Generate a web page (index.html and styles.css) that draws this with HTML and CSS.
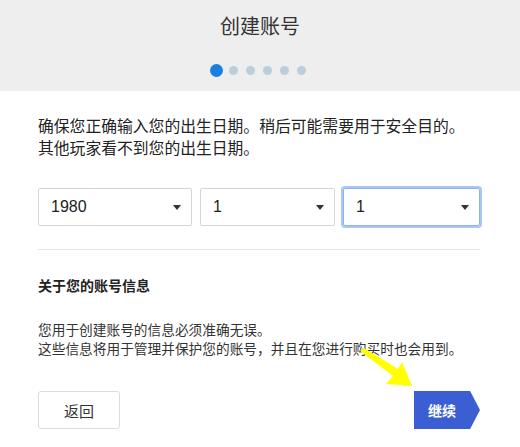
FILE: index.html
```html
<!DOCTYPE html>
<html lang="zh-CN">
<head>
    <meta charset="UTF-8">
    <title>创建账号</title>
    <link rel="stylesheet" href="styles.css">
</head>
<body>
    <div class="header">
        <h1>创建账号</h1>
        <div class="steps">
            <span class="dot active"></span>
            <span class="dot"></span>
            <span class="dot"></span>
            <span class="dot"></span>
            <span class="dot"></span>
            <span class="dot"></span>
        </div>
    </div>

    <div class="content">
        <div class="intro">
            <p>确保您正确输入您的出生日期。稍后可能需要用于安全目的。</p>
            <p>其他玩家看不到您的出生日期。</p>
        </div>

        <div class="date-row">
            <div class="select"><span>1980</span><span class="caret"></span></div>
            <div class="select"><span>1</span><span class="caret"></span></div>
            <div class="select focused"><span>1</span><span class="caret"></span></div>
        </div>

        <hr class="divider">

        <h3>关于您的账号信息</h3>
        <div class="info">
            <p>您用于创建账号的信息必须准确无误。</p>
            <p>这些信息将用于管理并保护您的账号，并且在您进行购买时也会用到。</p>
        </div>

        <div class="actions">
            <button class="btn-back">返回</button>
            <button class="btn-next">继续</button>
        </div>
    </div>

    <!-- annotation arrow -->
    <svg class="pointer" width="70" height="50" viewBox="0 0 70 50">
        <polygon points="2,3 6,0 40,21 44,14 54,38 28,36 35,28" fill="#ffff00"/>
    </svg>
</body>
</html>
```

FILE: styles.css
```css
body {
    margin: 0;
    width: 520px;
    font-family: "Microsoft YaHei", "Noto Sans CJK SC", sans-serif;
    color: #222;
    background: #fff;
    position: relative;
}
.header {
    background-color: #eeeeee;
    height: 91px;
    display: flex;
    flex-direction: column;
    align-items: center;
}
.header h1 {
    margin: 13px 0 0;
    font-size: 20px;
    font-weight: normal;
    line-height: 26px;
    color: #333;
}
.steps {
    display: flex;
    align-items: center;
    gap: 8px;
    margin-top: 25px;
    padding-right: 4px;
}
.dot {
    width: 9px;
    height: 9px;
    border-radius: 50%;
    background-color: #b9cfdb;
}
.dot.active {
    width: 13px;
    height: 13px;
    background-color: #1a7fe0;
    margin-right: -2px;
}
.content {
    padding: 0 40px 0 38px;
}
.intro {
    margin-top: 24px;
    font-size: 15.8px;
    line-height: 22px;
    color: #222;
}
.intro p,
.info p {
    margin: 0;
}
.date-row {
    display: grid;
    grid-template-columns: 154px 135px 1fr;
    gap: 8px;
    margin-top: 29px;
}
.select {
    height: 38px;
    box-sizing: border-box;
    border: 1px solid #d6d6d6;
    border-radius: 2px;
    display: flex;
    align-items: center;
    justify-content: space-between;
    padding: 0 10px 0 12px;
    font-family: "Liberation Sans", Arial, sans-serif;
    font-size: 16px;
    color: #222;
}
.select.focused {
    border-color: #8fb4f0;
    box-shadow: 0 0 0 2px #a9c6f5;
}
.caret {
    width: 0;
    height: 0;
    border-left: 4px solid transparent;
    border-right: 4px solid transparent;
    border-top: 5px solid #333;
}
.divider {
    border: 0;
    border-top: 1px solid #e6e6e6;
    margin: 23px 0 0;
}
h3 {
    margin: 25px 0 0;
    font-size: 14px;
    line-height: 20px;
    font-weight: bold;
    color: #222;
}
.info {
    margin-top: 25px;
    font-size: 13.7px;
    line-height: 19px;
    color: #333;
}
.actions {
    display: flex;
    justify-content: space-between;
    margin-top: 33px;
}
.btn-back {
    width: 82px;
    height: 38px;
    border: 1px solid #dcdcdc;
    border-radius: 3px;
    background: #fff;
    font-family: inherit;
    font-size: 15px;
    color: #333;
}
.btn-next {
    width: 66px;
    height: 38px;
    border: 0;
    padding: 0 10px 0 0;
    background-color: #3b5fd3;
    clip-path: polygon(0 0, 85% 0, 100% 50%, 85% 100%, 0 100%);
    font-family: inherit;
    font-size: 14px;
    font-weight: bold;
    color: #fff;
}
.pointer {
    position: absolute;
    left: 358px;
    top: 348px;
}
```
